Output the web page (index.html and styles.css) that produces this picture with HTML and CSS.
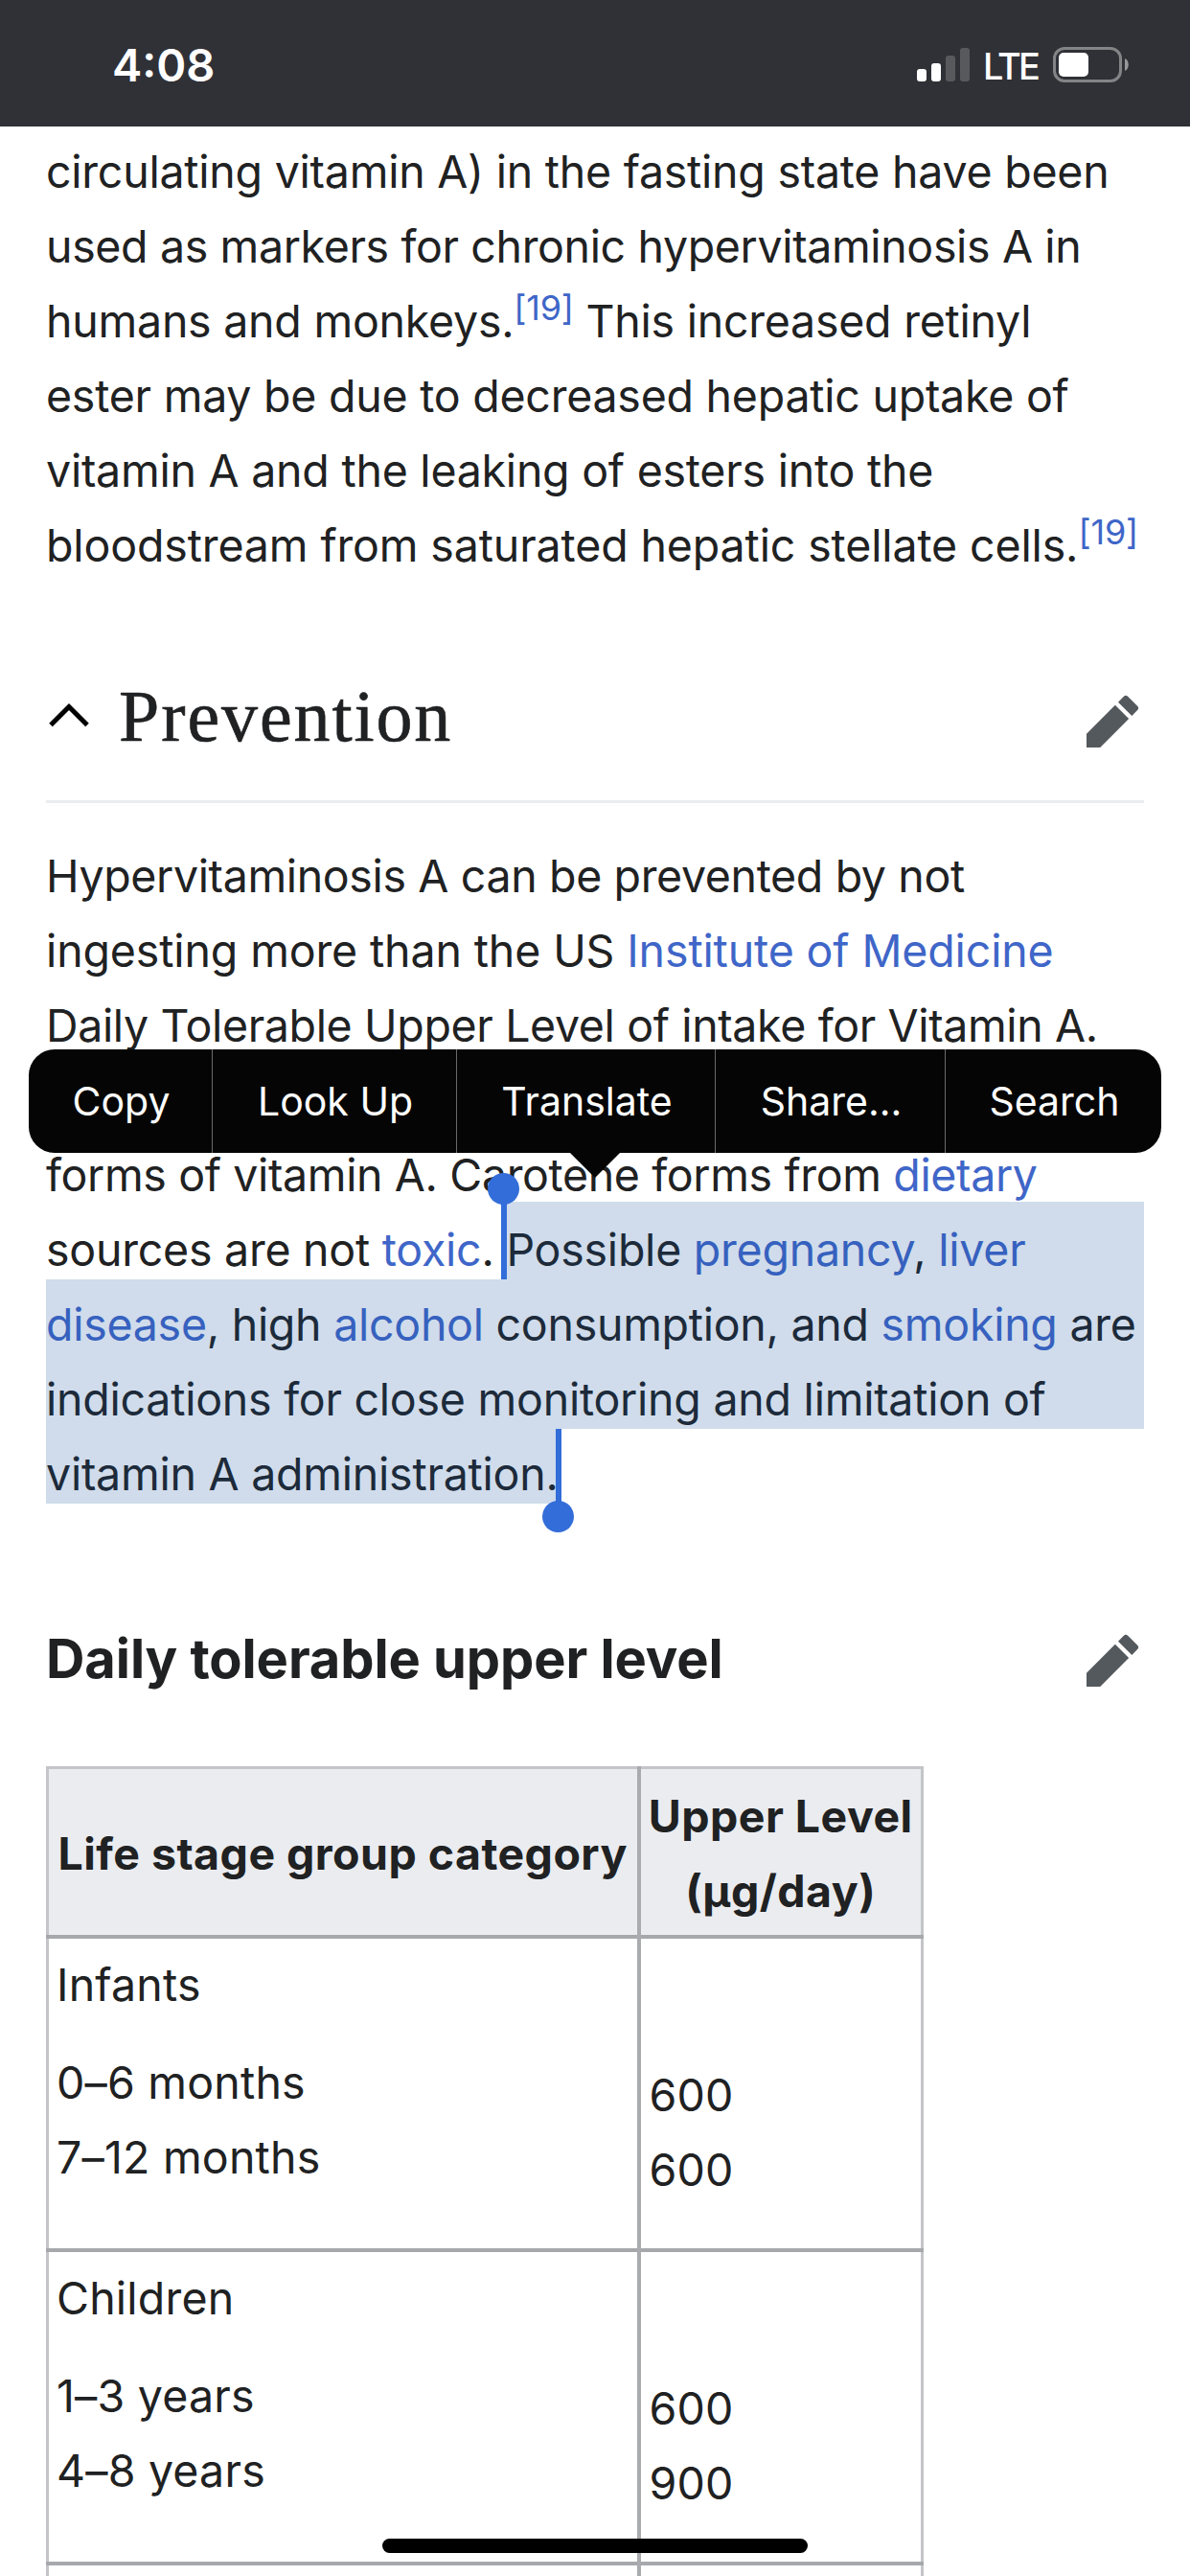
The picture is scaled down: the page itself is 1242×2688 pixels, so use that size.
FILE: index.html
```html
<!DOCTYPE html>
<html lang="en">
  <head>
    <meta charset="utf-8">
    <title>Hypervitaminosis A</title>
    <link rel="stylesheet" href="styles.css">
  </head>
  <body>
    <div class="status">
      <span class="time">4:08</span>
      <div class="status-right">
        <svg class="signal" width="55" height="35" viewBox="0 0 55 35">
          <rect x="0" y="22" width="10" height="13" rx="3" fill="#fff"/>
          <rect x="15" y="16" width="10" height="19" rx="3" fill="#fff"/>
          <rect x="30" y="8" width="10" height="27" rx="3" fill="#58595c"/>
          <rect x="45" y="0" width="10" height="35" rx="3" fill="#58595c"/>
        </svg>
        <span class="lte">LTE</span>
        <svg class="battery" width="80" height="37" viewBox="0 0 80 37">
          <rect x="1.5" y="1.5" width="69" height="34" rx="10.5" fill="none" stroke="#838486" stroke-width="3"/>
          <rect x="6" y="6" width="31" height="25" rx="5" fill="#fff"/>
          <path d="M75 12c5 2 5 11 0 13z" fill="#98989b"/>
        </svg>
      </div>
    </div>

    <div class="content">
      <p class="text first">
        <span>circulating vitamin A) in the fasting state have been</span><br>
        <span class="tighter">used as markers for chronic hypervitaminosis A in</span><br>
        <span>humans and monkeys.<sup><a>[19]</a></sup> This increased retinyl</span><br>
        <span>ester may be due to decreased hepatic uptake of</span><br>
        <span>vitamin A and the leaking of esters into the</span><br>
        <span class="looser">bloodstream from saturated hepatic stellate cells.<sup><a>[19]</a></sup></span>
      </p>

      <div class="section">
        <svg class="chevron" width="48" height="40" viewBox="0 0 48 40">
          <path d="M5 28.5L24 9.5L43 28.5" fill="none" stroke="#000" stroke-width="5"/>
        </svg>
        <h2>Prevention</h2>
        <svg class="pencil" width="60" height="60" viewBox="0 0 20 20">
          <path d="m16.77 8 1.94-2a1 1 0 0 0 0-1.41l-3.34-3.3a1 1 0 0 0-1.41 0L12 3.23zM1 14.25V19h4.75l9.96-9.96-4.75-4.75z" fill="#54595d"/>
        </svg>
      </div>

      <p class="text second">
        <span class="tighter">Hypervitaminosis A can be prevented by not</span><br>
        <span class="looser">ingesting more than the US <a>Institute of Medicine</a></span><br>
        <span class="tighter">Daily Tolerable Upper Level of intake for Vitamin A.</span><br>
        <br>
        <span class="tighter">forms of vitamin A. Carotene forms from <a>dietary</a></span><br>
        <span>sources are not <a>toxic</a>. Possible <a>pregnancy</a>, <a>liver</a></span><br>
        <span class="tight"><a>disease</a>, high <a>alcohol</a> consumption, and <a>smoking</a> are</span><br>
        <span>indications for close monitoring and limitation of</span><br>
        <span>vitamin A administration.</span>
      </p>

      <div class="subsection">
        <h3>Daily tolerable upper level</h3>
        <svg class="pencil" width="60" height="60" viewBox="0 0 20 20">
          <path d="m16.77 8 1.94-2a1 1 0 0 0 0-1.41l-3.34-3.3a1 1 0 0 0-1.41 0L12 3.23zM1 14.25V19h4.75l9.96-9.96-4.75-4.75z" fill="#54595d"/>
        </svg>
      </div>

      <table class="levels">
        <tr class="head"><th>Life stage group category</th><th>Upper Level<br>(μg/day)</th></tr>
        <tr class="row">
          <td>Infants<p>0–6 months<br>7–12 months</p></td>
          <td class="num"><p>600<br>600</p></td>
        </tr>
        <tr class="row">
          <td>Children<p>1–3 years<br>4–8 years</p></td>
          <td class="num"><p>600<br>900</p></td>
        </tr>
        <tr class="cut"><td></td><td></td></tr>
      </table>
    </div>

    <!-- text selection -->
    <div class="mark mark-top"></div>
    <div class="mark mark-mid"></div>
    <div class="mark mark-end"></div>
    <div class="handle handle-start"></div>
    <div class="handle handle-end"></div>

    <div class="menu">
      <span class="copy">Copy</span>
      <span class="look">Look Up</span>
      <span class="translate">Translate</span>
      <span class="share">Share...</span>
      <span class="search">Search</span>
    </div>

    <div class="home"></div>
  </body>
</html>
```

FILE: styles.css
```css
* {
  box-sizing: border-box;
  margin: 0;
  padding: 0;
}

html, body {
  width: 1242px;
  height: 2688px;
  overflow: hidden;
}

body {
  position: relative;
  background: #fff;
  color: #202122;
  font-family: Inter, "Liberation Sans", sans-serif;
}

a {
  color: #3f66c8;
}

.status {
  display: flex;
  justify-content: space-between;
  height: 132px;
  padding: 0 63px 0 117px;
  background: #303136;
  color: #fff;
}

.time {
  font-size: 47px;
  font-weight: 600;
  line-height: 136px;
}

.status-right {
  display: flex;
  align-items: flex-start;
}

.signal {
  margin-top: 50px;
}

.lte {
  width: 87px;
  padding-left: 14px;
  font-size: 38px;
  font-weight: 500;
  letter-spacing: -2.8px;
  line-height: 139px;
}

.battery {
  margin-top: 49px;
}

.content {
  height: 2556px;
  overflow: hidden;
  padding: 0 48px;
}

.text {
  font-size: 46.5px;
  letter-spacing: -.24px;
  line-height: 78px;
  white-space: nowrap;
}

.tight {
  letter-spacing: -.27px;
}

.tighter {
  letter-spacing: -.36px;
}

.looser {
  letter-spacing: -.13px;
}

.first {
  padding-top: 8px;
}

sup {
  position: relative;
  top: -18px;
  font-size: 36px;
  line-height: 0;
  vertical-align: baseline;
}

.section {
  display: flex;
  align-items: center;
  height: 163px;
  margin-top: 67px;
  padding-bottom: 4px;
  border-bottom: 3px solid #eaecf0;
}

.chevron {
  margin-bottom: 11px;
}

.section h2 {
  margin-bottom: 11px;
  margin-left: 28px;
  font-family: "Liberation Serif", serif;
  font-size: 76px;
  font-weight: 400;
  letter-spacing: 1.9px;
  -webkit-text-stroke: .6px #202122;
}

.pencil {
  margin-left: auto;
  margin-right: 3px;
}

.second {
  margin-top: 37px;
}

.subsection {
  display: flex;
  align-items: center;
  height: 110px;
  margin-top: 99px;
}

.subsection .pencil {
  margin-top: 4px;
}

.subsection h3 {
  font-size: 56px;
  font-weight: 700;
  letter-spacing: -.08px;
}

.levels {
  width: 916px;
  margin-top: 57px;
  border-collapse: collapse;
  table-layout: fixed;
  font-size: 46.5px;
  line-height: 78px;
}

.levels th, .levels td {
  border: 3px solid #c4c5c8;
  padding: 0 8px;
  white-space: nowrap;
}

.levels th + th, .levels td + td {
  border-left: 4px solid #a9abae;
}

.levels tr + tr td {
  border-top: 4px solid #a6a8ab;
}

.levels th:first-child {
  width: 617px;
}

.head {
  height: 176px;
  background: #eaecf0;
}

.levels th {
  padding: 3px 0 0;
  font-weight: 700;
  letter-spacing: .45px;
}

.row {
  height: 327px;
}

.levels td {
  padding-top: 9px;
  letter-spacing: .2px;
  vertical-align: top;
}

.levels td p {
  margin-top: 24px;
}

.levels .num {
  padding-left: 9px;
}

.levels .num p {
  margin-top: 115px;
}

/* the next row runs off the bottom of the screen */
.levels .cut td {
  height: 20px;
  padding: 0;
}

.mark {
  position: absolute;
  background: rgba(20, 80, 155, .2);
}

.mark-top {
  left: 526px;
  top: 1254px;
  width: 668px;
  height: 81px;
}

.mark-mid {
  left: 48px;
  top: 1335px;
  width: 1146px;
  height: 156px;
}

.mark-end {
  left: 48px;
  top: 1491px;
  width: 535px;
  height: 78px;
}

.handle {
  position: absolute;
  width: 6px;
  background: #336dd9;
}

.handle::after {
  content: "";
  position: absolute;
  left: -14px;
  width: 33px;
  height: 33px;
  border-radius: 50%;
  background: #336dd9;
}

.handle-start {
  left: 523px;
  top: 1250px;
  height: 85px;
}

.handle-start::after {
  top: -26px;
}

.handle-end {
  left: 580px;
  top: 1491px;
  height: 80px;
}

.handle-end::after {
  top: 75px;
}

.menu {
  position: absolute;
  left: 30px;
  top: 1095px;
  display: flex;
  width: 1182px;
  height: 108px;
  border-radius: 27px;
  background: #050505;
  color: #fff;
  font-size: 41px;
  line-height: 109px;
  text-align: center;
}

.menu::after {
  content: "";
  position: absolute;
  left: 564px;
  top: 107px;
  border: 27px solid transparent;
  border-top-color: #050505;
  border-bottom: 0;
}

.menu span {
  padding-left: 2px;
}

.menu span + span {
  border-left: 1px solid #6a6a6a;
}

.copy { width: 191px; }
.look { width: 255px; }
.translate { width: 270px; }
.share { width: 240px; }
.search { width: 226px; }

.home {
  position: absolute;
  left: 399px;
  top: 2649px;
  width: 444px;
  height: 15px;
  border-radius: 8px;
  background: #000;
}
```
